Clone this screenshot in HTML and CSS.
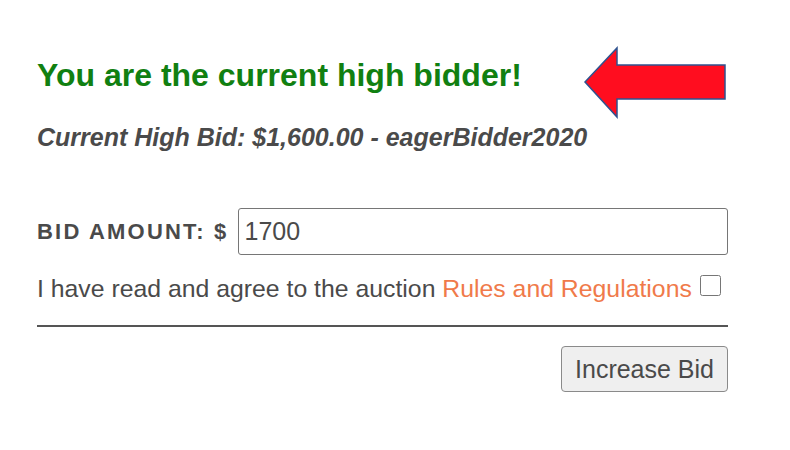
FILE: index.html
```html
<!DOCTYPE html>
<html lang="en">
<head>
    <meta charset="UTF-8">
    <meta name="viewport" content="width=device-width, initial-scale=1.0">
    <title>Place Bid</title>
    <link rel="stylesheet" href="styles.css">
</head>
<body>
    <div class="bid-box">
        <h2 class="high-bidder">You are the current high bidder!</h2>
        <p class="current-bid">Current High Bid: $1,600.00 - eagerBidder2020</p>

        <svg class="arrow" width="144" height="74" viewBox="0 0 144 74">
            <polygon points="2,36 34,2 34,19 142,19 142,53 34,53 34,71" fill="#ff0d1f" stroke="#2f528f" stroke-width="1.5"/>
        </svg>

        <form class="bid-form">
            <div class="amount-row">
                <label for="bidAmount">BID AMOUNT: $</label>
                <input type="text" id="bidAmount" value="1700">
            </div>
            <div class="agree-row">
                <span>I have read and agree to the auction <a href="#">Rules and Regulations</a></span>
                <input type="checkbox" id="agree">
            </div>
            <hr>
            <div class="submit-row">
                <button type="submit">Increase Bid</button>
            </div>
        </form>
    </div>
</body>
</html>
```

FILE: styles.css
```css
body {
    font-family: "Liberation Sans", Arial, sans-serif;
    background-color: #fff;
    color: #4a4a4a;
    margin: 0;
    padding: 0;
}
.bid-box {
    position: relative;
    width: 691px;
    margin-left: 37px;
    padding-top: 55px;
}
.high-bidder {
    color: #118011;
    font-size: 32px;
    font-weight: bold;
    margin: 0;
    line-height: 40px;
}
.current-bid {
    font-size: 25px;
    font-weight: bold;
    font-style: italic;
    margin: 27px 0 0;
    line-height: 30px;
}
.arrow {
    position: absolute;
    left: 546px;
    top: 46px;
}
.bid-form {
    margin-top: 56px;
}
.amount-row {
    display: flex;
    align-items: center;
    gap: 9px;
}
.amount-row label {
    font-size: 22px;
    font-weight: bold;
    letter-spacing: 2.2px;
}
.amount-row input {
    flex: 1;
    height: 47px;
    box-sizing: border-box;
    border: 1px solid #767676;
    border-radius: 3px;
    padding: 0 6px;
    font-family: inherit;
    font-size: 25px;
    color: #4a4a4a;
}
.agree-row {
    display: flex;
    align-items: flex-start;
    gap: 8px;
    margin-top: 19px;
    font-size: 24.8px;
    line-height: 30px;
}
.agree-row a {
    color: #f07a4a;
    text-decoration: none;
}
.agree-row input {
    width: 21px;
    height: 21px;
    margin: 1px 0 0;
}
hr {
    border: none;
    border-top: 2px solid #555;
    margin: 21px 0 19px;
}
.submit-row {
    display: flex;
    justify-content: flex-end;
}
button {
    font-family: inherit;
    font-size: 25px;
    color: #4a4a4a;
    background-color: #efefef;
    border: 1px solid #8a8a8a;
    border-radius: 4px;
    padding: 0 13px;
    height: 46px;
    cursor: pointer;
}
```
